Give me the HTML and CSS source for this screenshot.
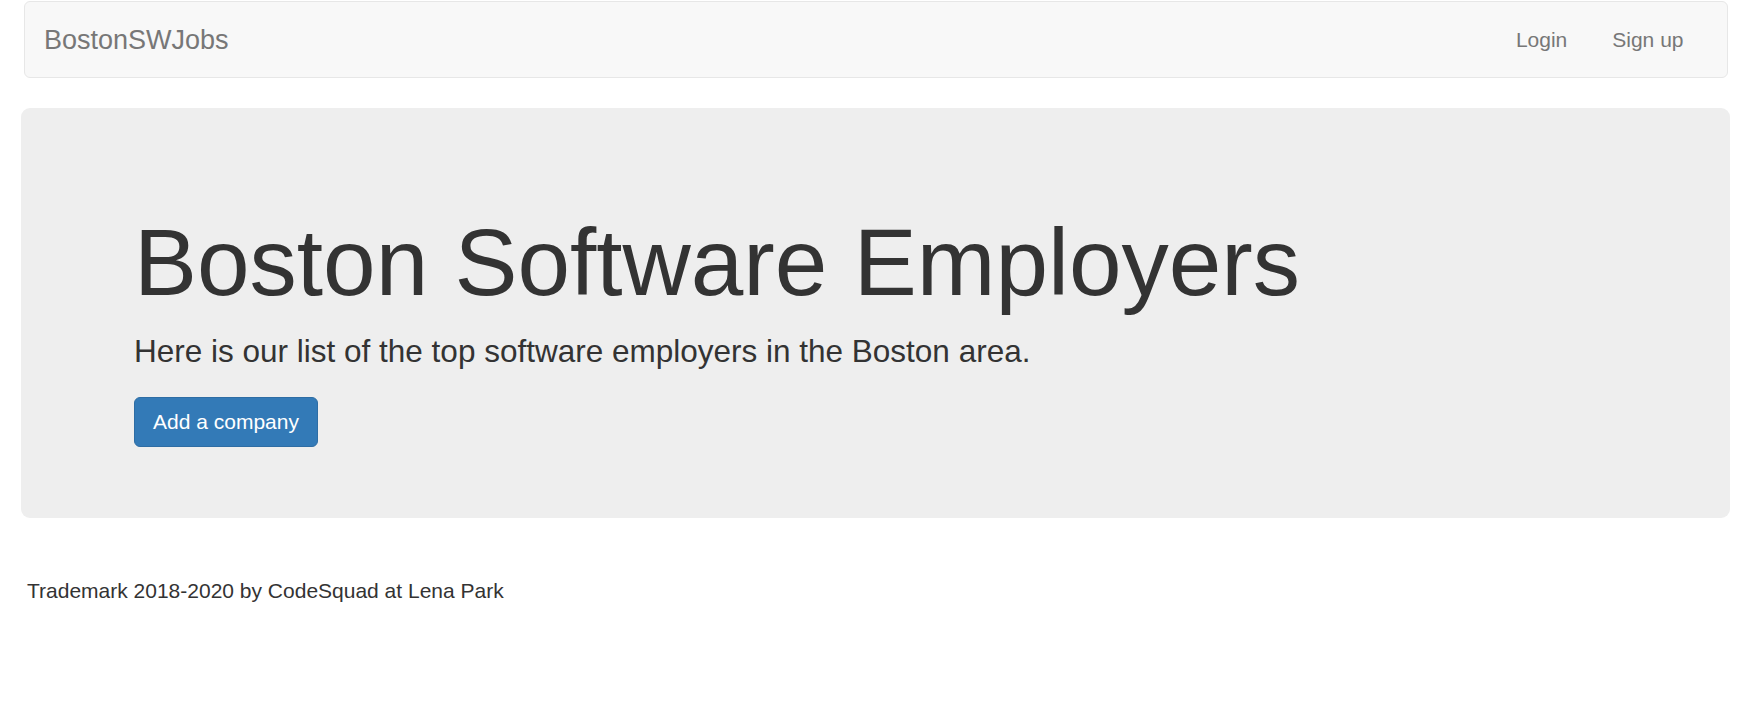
FILE: index.html
```html
<!DOCTYPE html>
<html lang="en">
<head>
<meta charset="utf-8">
<title>BostonSWJobs</title>
<link rel="stylesheet" href="styles.css">
</head>
<body>
  <nav class="navbar">
    <a class="brand" href="#">BostonSWJobs</a>
    <ul class="nav">
      <li><a href="#">Login</a></li>
      <li><a href="#">Sign up</a></li>
    </ul>
  </nav>
  <div class="jumbotron">
    <h1>Boston Software Employers</h1>
    <p>Here is our list of the top software employers in the Boston area.</p>
    <a class="btn" href="#">Add a company</a>
  </div>
  <footer class="footer">Trademark 2018-2020 by CodeSquad at Lena Park</footer>
</body>
</html>
```
FILE: styles.css
```css
html, body {
  margin: 0;
  padding: 0;
  background: #fff;
}
body {
  font-family: "Liberation Sans", Arial, Helvetica, sans-serif;
  color: #333;
}
a { text-decoration: none; }

.navbar {
  margin: 1px 29px 30px 24px;
  height: 75px;
  background: #f8f8f8;
  border: 1px solid #e7e7e7;
  border-radius: 6px;
  display: flex;
  justify-content: space-between;
  align-items: flex-start;
}
.brand {
  display: block;
  padding: 23px 0 0 19px;
  font-size: 27px;
  line-height: 30px;
  color: #777;
}
.nav {
  list-style: none;
  margin: 0;
  padding: 0 21px 0 0;
  display: flex;
}
.nav a {
  display: block;
  padding: 23px 22.5px 22px;
  font-size: 21px;
  line-height: 30px;
  color: #777;
}

.jumbotron {
  margin: 0 27px 0 21px;
  padding: 72px 0 71px 113px;
  background: #eee;
  border-radius: 9px;
}
.jumbotron h1 {
  margin: 30px 0 15px;
  font-size: 94.5px;
  line-height: 104px;
  font-weight: 500;
  color: #333;
}
.jumbotron p {
  margin: 0 0 22.5px;
  font-size: 31.5px;
  line-height: 45px;
  font-weight: 200;
  color: #333;
}
.btn {
  display: inline-block;
  padding: 9px 18px;
  font-size: 21px;
  line-height: 30px;
  color: #fff;
  background: #337ab7;
  border: 1.5px solid #2e6da4;
  border-radius: 6px;
  vertical-align: top;
}

.footer {
  margin-top: 58px;
  padding-left: 27px;
  font-size: 21px;
  line-height: 30px;
  color: #333;
}
```
